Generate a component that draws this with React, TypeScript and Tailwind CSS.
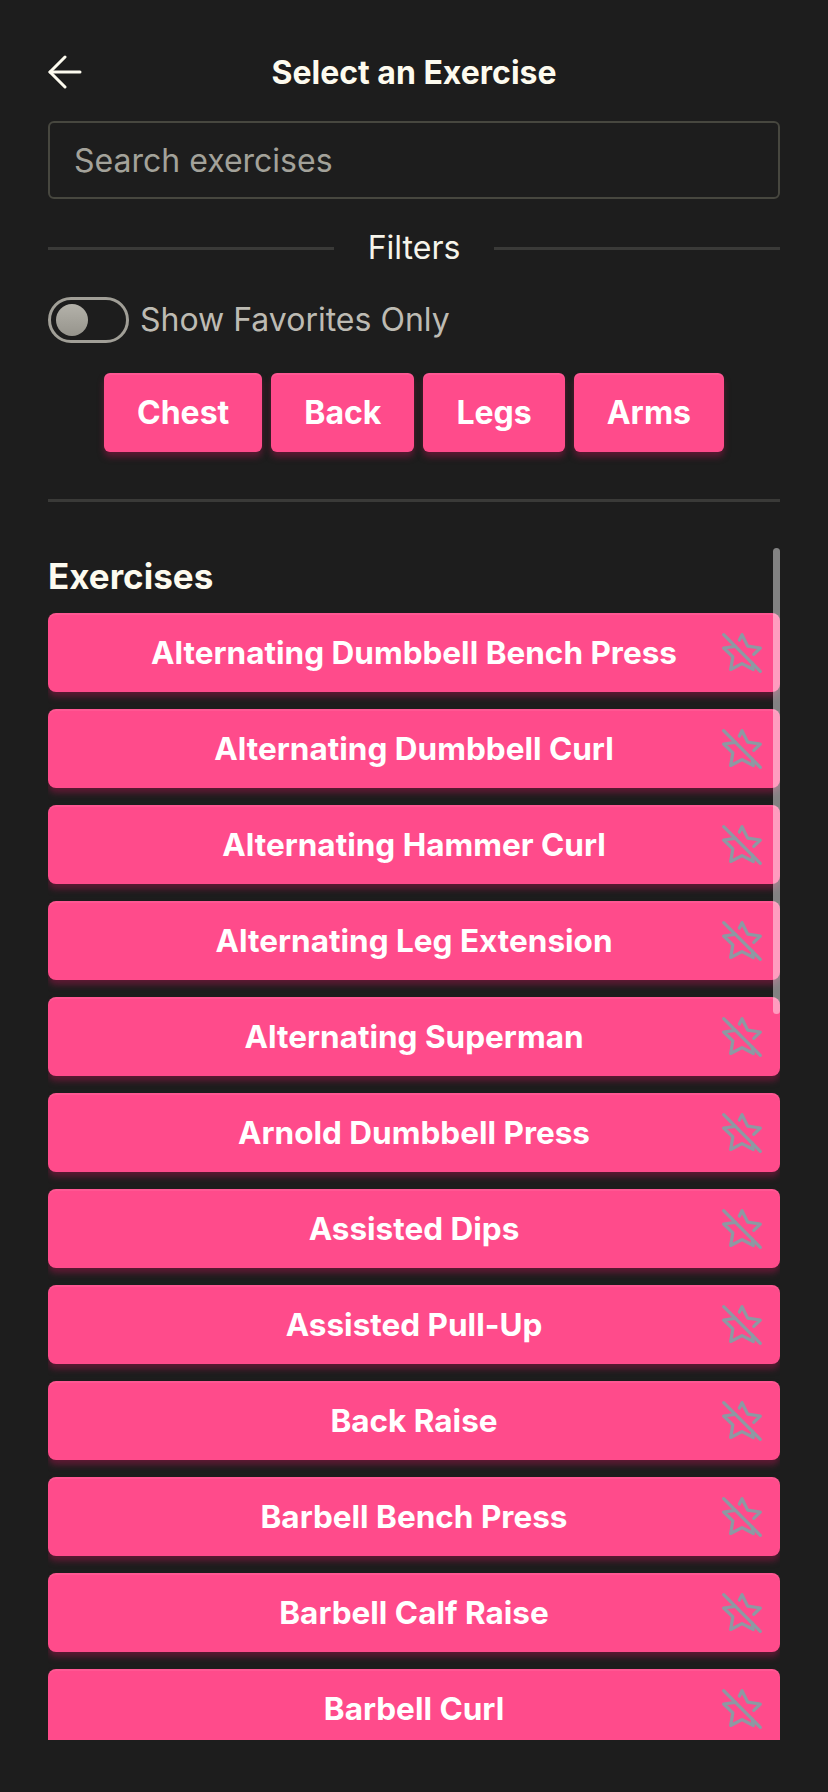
import { StarOff } from "lucide-react";

const categories = ["Chest", "Back", "Legs", "Arms"];

const exercises = [
  "Alternating Dumbbell Bench Press",
  "Alternating Dumbbell Curl",
  "Alternating Hammer Curl",
  "Alternating Leg Extension",
  "Alternating Superman",
  "Arnold Dumbbell Press",
  "Assisted Dips",
  "Assisted Pull-Up",
  "Back Raise",
  "Barbell Bench Press",
  "Barbell Calf Raise",
  "Barbell Curl",
];

const pinkShadow =
  "shadow-[inset_0_2px_0_rgba(255,255,255,0.07),0_5px_6px_rgba(105,25,55,0.85)]";

const App = () => {
  return (
    <div className="min-h-[1792px] bg-[#1d1d1d] px-12 pt-[53px] font-['Inter',sans-serif]">
      {/* header */}
      <div className="grid h-10 grid-cols-[1fr_auto_1fr] items-center">
        <button className="-mt-[2px] flex h-10 w-10 items-center">
          <svg width="34" height="34" viewBox="0 0 34 34" fill="none" stroke="#fdfbef" strokeWidth="3" strokeLinecap="round" strokeLinejoin="round">
            <path d="M32 17H2" />
            <path d="M17 2L2 17l15 15" />
          </svg>
        </button>
        <h1 className="text-[32px] leading-10 font-bold text-[#fdfbef]">Select an Exercise</h1>
        <div />
      </div>

      <input
        placeholder="Search exercises"
        className="mt-[28px] h-[78px] w-full rounded-md border-2 border-[#47473f] bg-transparent pl-[24px] text-[32px] text-white outline-none placeholder:text-[#a3a29a]"
      />

      {/* filters */}
      <div className="mt-[32px] flex h-[34px] items-center gap-[34px]">
        <div className="h-[3px] flex-1 bg-[#3a3a38]" />
        <span className="text-[32px] leading-[34px] text-[#f6f4ea]">Filters</span>
        <div className="h-[3px] flex-1 bg-[#3a3a38]" />
      </div>

      <div className="mt-[32px] flex h-[46px] items-center gap-[11px]">
        <div className="flex h-[46px] w-[81px] items-center rounded-full border-[3px] border-[#a19f97] pl-[5px]">
          <div className="h-8 w-8 rounded-full bg-linear-to-b from-[#b4b2aa] to-[#96948c]" />
        </div>
        <span className="text-[32px] leading-[46px] text-[#bdbbb3]">Show Favorites Only</span>
      </div>

      <div className="mt-[30px] flex justify-center gap-[9px]">
        {categories.map((c) => (
          <button
            key={c}
            className={`h-[79px] rounded-md bg-[#ff4b8b] px-[33px] text-[32px] font-bold text-white ${pinkShadow}`}
          >
            {c}
          </button>
        ))}
      </div>

      <div className="mt-[47px] h-[3px] bg-[#3a3a38]" />

      {/* exercise list */}
      <div className="relative mt-[46px] h-[1192px] overflow-hidden">
        <h2 className="pt-[8px] text-[35px] font-bold leading-[40px] text-[#fdfbef]">Exercises</h2>
        <div className="mt-[17px] flex flex-col gap-[17px]">
          {exercises.map((name) => (
            <div
              key={name}
              className={`relative flex h-[79px] shrink-0 items-center justify-center rounded-lg bg-[#ff4b8b] ${pinkShadow}`}
            >
              <span className="text-[31.5px] leading-10 font-bold text-white">{name}</span>
              <StarOff className="absolute right-4 top-1/2 -translate-y-1/2" size={44} strokeWidth={1.75} color="#8d99a3" />
            </div>
          ))}
        </div>
        <div className="absolute right-0 top-0 h-[466px] w-[7px] rounded-full bg-white/45" />
      </div>
    </div>
  );
};

export default App;
